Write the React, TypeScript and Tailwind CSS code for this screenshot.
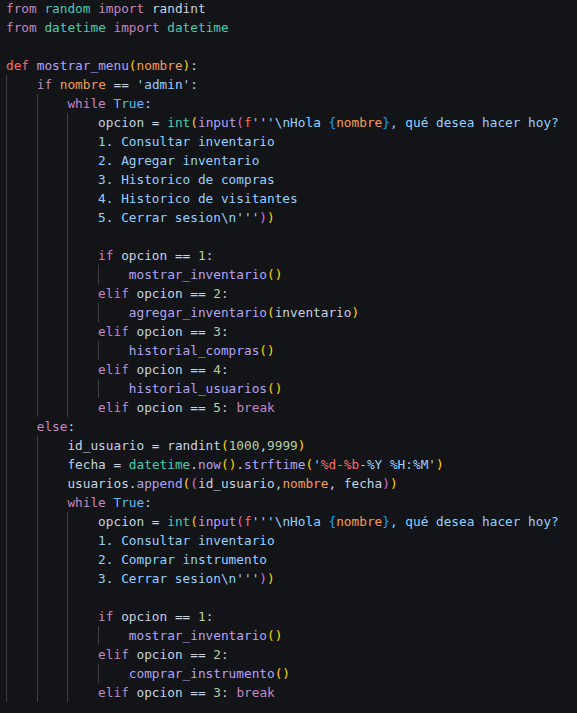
import React from 'react'

// token colours
const K = 'text-[#c586c0]' // control keywords
const D = 'text-[#f47067]' // def
const F = 'text-[#b4a3f5]' // functions
const P = 'text-[#f69d50]' // params
const V = 'text-[#c5d3e2]' // variables / operators
const T = 'text-[#4ec9b0]' // classes / modules
const S = 'text-[#96d0ff]' // strings
const B = 'text-[#6cb6ff]' // True
const N = 'text-[#b5cea8]' // numbers
const Y = 'text-[#ffd700]' // bracket 1
const Pk = 'text-[#da70d6]' // bracket 2
const Bl = 'text-[#179fff]' // bracket 3
const R = 'text-[#f47067]' // f prefix / format

type Tok = [string, string] | string
type Line = { g: number; pad?: number; t: Tok[] }

const menuAdmin = (): Tok[] => [
  [V, 'opcion'], ' ', [V, '='], ' ', [T, 'int'], [Y, '('], [F, 'input'], [Pk, '('], [R, 'f'],
  [S, "'''\\nHola "], [Bl, '{'], [P, 'nombre'], [Bl, '}'], [S, ', qué desea hacer hoy?'],
]

const cond = (kw: string, n: string, brk = false): Tok[] => {
  const out: Tok[] = [[K, kw], ' ', [V, 'opcion'], ' ', [V, '=='], ' ', [N, n], [V, ':']]
  if (brk) out.push(' ', [K, 'break'])
  return out
}

const call = (name: string, arg?: string): Tok[] =>
  arg ? [[F, name], [Y, '('], [V, arg], [Y, ')']] : [[F, name], [Y, '()']]

const lines: Line[] = [
  { g: 0, t: [[K, 'from'], ' ', [T, 'random'], ' ', [K, 'import'], ' ', [V, 'randint']] },
  { g: 0, t: [[K, 'from'], ' ', [T, 'datetime'], ' ', [K, 'import'], ' ', [T, 'datetime']] },
  { g: 0, t: [] },
  { g: 0, t: [[D, 'def'], ' ', [F, 'mostrar_menu'], [Y, '('], [P, 'nombre'], [Y, ')'], [V, ':']] },
  { g: 1, t: [[K, 'if'], ' ', [P, 'nombre'], ' ', [V, '=='], ' ', [S, "'admin'"], [V, ':']] },
  { g: 2, t: [[K, 'while'], ' ', [B, 'True'], [V, ':']] },
  { g: 3, t: menuAdmin() },
  { g: 3, t: [[S, '1. Consultar inventario']] },
  { g: 3, t: [[S, '2. Agregar inventario']] },
  { g: 3, t: [[S, '3. Historico de compras']] },
  { g: 3, t: [[S, '4. Historico de visitantes']] },
  { g: 3, t: [[S, "5. Cerrar sesion\\n'''"], [Pk, ')'], [Y, ')']] },
  { g: 3, t: [] },
  { g: 3, t: cond('if', '1') },
  { g: 4, t: call('mostrar_inventario') },
  { g: 3, t: cond('elif', '2') },
  { g: 4, t: call('agregar_inventario', 'inventario') },
  { g: 3, t: cond('elif', '3') },
  { g: 4, t: call('historial_compras') },
  { g: 3, t: cond('elif', '4') },
  { g: 4, t: call('historial_usuarios') },
  { g: 3, t: cond('elif', '5', true) },
  { g: 1, t: [[K, 'else'], [V, ':']] },
  { g: 2, t: [[V, 'id_usuario'], ' ', [V, '='], ' ', [V, 'randint'], [Y, '('], [N, '1000'], [V, ','], [N, '9999'], [Y, ')']] },
  {
    g: 2,
    t: [
      [V, 'fecha'], ' ', [V, '='], ' ', [T, 'datetime'], [V, '.'], [F, 'now'], [Y, '()'], [V, '.'], [F, 'strftime'],
      [Y, '('], [S, "'"], [R, '%d-%b'], [S, "-%Y %H:%M'"], [Y, ')'],
    ],
  },
  {
    g: 2,
    t: [
      [V, 'usuarios'], [V, '.'], [F, 'append'], [Y, '('], [Pk, '('], [V, 'id_usuario'], [V, ','], [P, 'nombre'],
      [V, ','], ' ', [V, 'fecha'], [Pk, ')'], [Y, ')'],
    ],
  },
  { g: 2, t: [[K, 'while'], ' ', [B, 'True'], [V, ':']] },
  { g: 3, t: menuAdmin() },
  { g: 3, t: [[S, '1. Consultar inventario']] },
  { g: 3, t: [[S, '2. Comprar instrumento']] },
  { g: 3, t: [[S, "3. Cerrar sesion\\n'''"], [Pk, ')'], [Y, ')']] },
  { g: 3, t: [] },
  { g: 3, t: cond('if', '1') },
  { g: 4, t: call('mostrar_inventario') },
  { g: 3, t: cond('elif', '2') },
  { g: 4, t: call('comprar_instrumento') },
  { g: 3, t: cond('elif', '3', true) },
]

function CodeLine({ line }: { line: Line }) {
  const guides = Array.from({ length: line.g })
  return (
    <div className="flex h-[19px] items-stretch whitespace-pre">
      {guides.map((_, i) => (
        <span key={i} className="inline-block w-[4ch] shrink-0 border-l border-[#3d3f43]" />
      ))}
      <span className="leading-[19px]">
        {line.t.map((tok, i) =>
          typeof tok === 'string' ? (
            <span key={i}>{tok}</span>
          ) : (
            <span key={i} className={tok[0]}>
              {tok[1]}
            </span>
          ),
        )}
      </span>
    </div>
  )
}

export default function App() {
  return (
    <div className="h-[713px] w-[577px] overflow-hidden bg-[#121418]">
      <div className="-mt-px pl-[6px] font-['DejaVu_Sans_Mono',monospace] text-[12.75px] text-[#c5d3e2]">
        {lines.map((l, i) => (
          <CodeLine key={i} line={l} />
        ))}
      </div>
    </div>
  )
}
